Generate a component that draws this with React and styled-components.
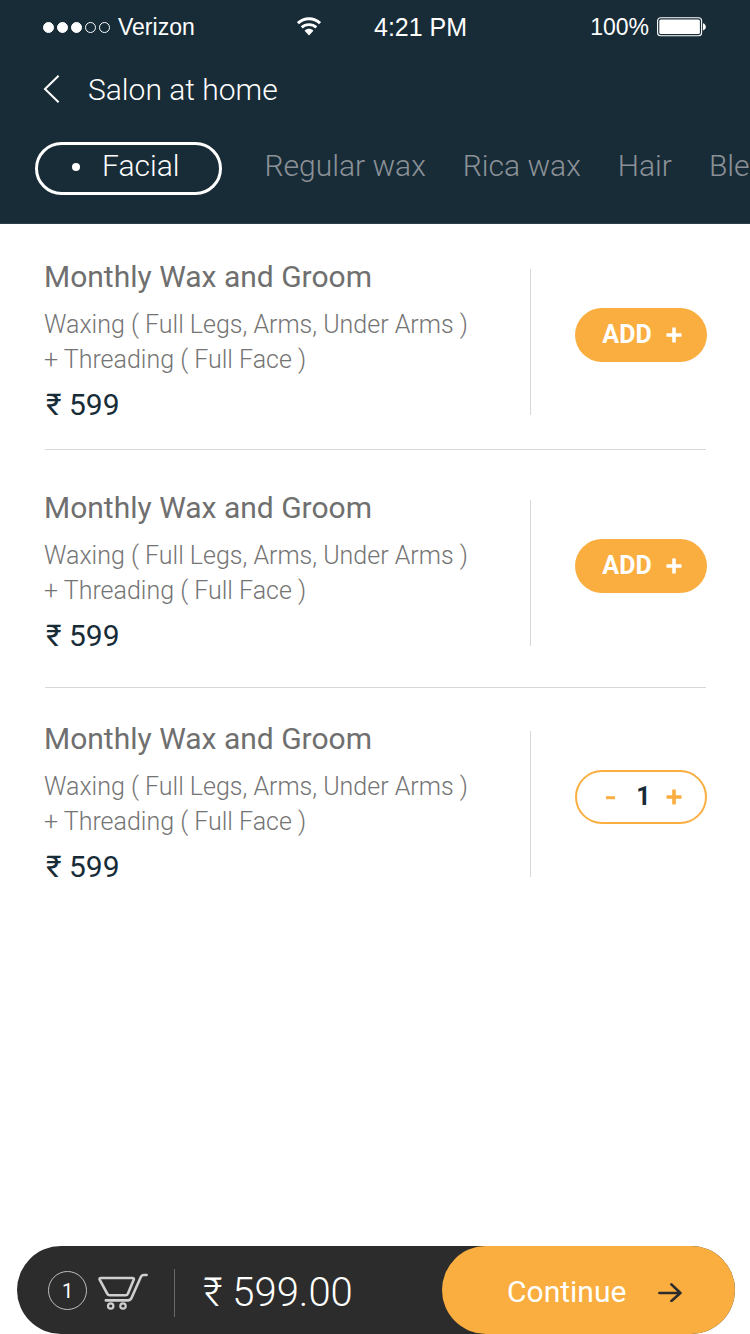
import React from "react";
import styled, { createGlobalStyle } from "styled-components";

const color = {
  navy: "#182c37",
  orange: "#faae40",
  charcoal: "#2c2c2c",
  line: "#d8d8d8",
  title: "#6f6f6f",
  text: "#747474",
  muted: "#8b9197",
};

const GlobalStyle = createGlobalStyle`
  *, *::before, *::after { box-sizing: border-box; }
  body {
    margin: 0;
    background: #fff;
    font-family: Roboto, "Noto Sans", sans-serif;
  }
  button { font-family: inherit; cursor: pointer; }
  svg { display: block; flex: none; }
`;

const Page = styled.div`
  min-height: 100vh;
  display: flex;
  flex-direction: column;
  overflow-x: hidden;
`;

const Header = styled.header`
  background: ${color.navy};
  color: #fff;
  padding-bottom: 28px;
  border-bottom: 1px solid #2c3e48;
`;

const StatusBar = styled.div`
  display: grid;
  grid-template-columns: 254px 77px 1fr auto;
  align-items: center;
  height: 54px;
  padding: 0 44px 0 43px;
  font-family: "Liberation Sans", Arial, sans-serif;
  font-size: 23px;
  line-height: 28px;
`;

const StatusGroup = styled.div`
  display: flex;
  align-items: center;
  gap: 8px;
`;

const Signal = styled.div`
  display: flex;
  gap: 3px;
`;

const SignalDot = styled.span`
  width: 11px;
  height: 11px;
  border: 1px solid #fff;
  border-radius: 50%;
  background: ${(p) => (p.$on ? "#fff" : "transparent")};
`;

const Clock = styled.time`
  font-size: 25px;
`;

const TitleBar = styled.div`
  display: flex;
  align-items: center;
  gap: 27px;
  height: 72px;
  padding: 0 43px;
`;

const BackButton = styled.button`
  display: flex;
  padding: 0 0 2px;
  border: 0;
  background: none;
  color: inherit;
`;

const PageTitle = styled.h1`
  margin: 0;
  font-size: 30px;
  line-height: 36px;
  font-weight: 300;
`;

const Tabs = styled.nav`
  display: flex;
  align-items: center;
  gap: 37px;
  margin-top: 16px;
  padding-left: 35px;
  overflow: hidden;
`;

const Tab = styled.button`
  flex: none;
  padding: 0 0 5px;
  border: 0;
  background: none;
  color: ${color.muted};
  font-size: 30px;
  line-height: 36px;
  font-weight: 300;
`;

const ActiveTab = styled(Tab)`
  display: flex;
  align-items: center;
  gap: 22px;
  height: 53px;
  margin-right: 6px;
  padding: 0 39px 5px 34px;
  border: 3px solid #fff;
  border-radius: 27px;
  color: #fff;
`;

const Bullet = styled.span`
  width: 8px;
  height: 8px;
  margin-top: 2px;
  border-radius: 50%;
  background: currentColor;
`;

const Main = styled.main`
  flex: 1;
  padding: 35px 0;
`;

const Service = styled.article`
  display: flex;
  padding: 0 43px 0 44px;
`;

const Info = styled.div`
  flex: 1;
`;

const Name = styled.h2`
  margin: 0 0 12px;
  color: ${color.title};
  font-size: 30px;
  line-height: 36px;
  font-weight: 400;
`;

const Description = styled.p`
  margin: 0 0 10px;
  color: ${color.text};
  font-size: 25px;
  line-height: 35px;
  font-weight: 300;
`;

const Price = styled.p`
  margin: 0;
  padding-left: 2px;
  color: ${color.navy};
  font-size: 30px;
  line-height: 36px;
`;

const Action = styled.div`
  margin: 10px 0 8px;
  padding: 39px 0 0 44px;
  border-left: 1px solid ${color.line};
`;

const Rule = styled.hr`
  margin: ${(p) => p.$above}px 44px ${(p) => p.$below}px 45px;
  border: 0;
  border-top: 1px solid ${color.line};
`;

const AddButton = styled.button`
  display: flex;
  align-items: center;
  justify-content: center;
  gap: 14px;
  width: 132px;
  height: 54px;
  padding: 0 0 1px 2px;
  border: 0;
  border-radius: 27px;
  background: ${color.orange};
  color: #fff;
  font-size: 25px;
  line-height: 30px;
  font-weight: 700;
`;

const Stepper = styled.div`
  display: flex;
  align-items: center;
  justify-content: space-between;
  width: 132px;
  height: 54px;
  padding: 0 23px 1px 29px;
  border: 2px solid ${color.orange};
  border-radius: 27px;
`;

const StepButton = styled.button`
  display: flex;
  padding: 0;
  border: 0;
  background: none;
  color: ${color.orange};
`;

const Quantity = styled.span`
  padding-left: 6px;
  color: ${color.navy};
  font-size: 25px;
  line-height: 30px;
  font-weight: 700;
`;

const CartBar = styled.footer`
  display: flex;
  align-items: center;
  height: 88px;
  margin: 0 15px 0 17px;
  padding-left: 31px;
  border-radius: 44px;
  background: ${color.charcoal};
  color: #fff;
`;

const CartSummary = styled.div`
  display: flex;
  align-items: flex-start;
  gap: 11px;
  padding-top: 2px;
`;

const Count = styled.span`
  display: flex;
  align-items: center;
  justify-content: center;
  width: 39px;
  height: 39px;
  border: 1px solid #bdbdbd;
  border-radius: 50%;
  font-size: 20px;
`;

const Total = styled.div`
  flex: 1;
  margin: 6px 0 0 26px;
  padding-left: 28px;
  border-left: 1px solid #696969;
  font-size: 40px;
  line-height: 48px;
  font-weight: 300;
  white-space: nowrap;
`;

const ContinueButton = styled.button`
  display: flex;
  align-items: center;
  gap: 32px;
  width: 293px;
  height: 88px;
  padding: 4px 0 0 65px;
  border: 0;
  border-radius: 44px;
  background: ${color.orange};
  color: #fff;
  font-size: 30px;
  line-height: 36px;
`;

const WifiIcon = () => (
  <svg width="24" height="20" viewBox="0 0 24 20" fill="none" stroke="#fff" aria-hidden="true">
    <path d="M1 6.2C7.2 0.2 16.8 0.2 23 6.2" strokeWidth="3" />
    <path d="M4.7 10.4C8.8 6.6 15.2 6.6 19.3 10.4" strokeWidth="2.8" />
    <path d="M7.6 13.8C10.2 11.2 13.8 11.2 16.4 13.8L12 18.4Z" fill="#fff" stroke="none" />
  </svg>
);

const BatteryIcon = () => (
  <svg width="49" height="20" viewBox="0 0 49 20" fill="none" aria-hidden="true">
    <rect x="0.6" y="0.8" width="44" height="18" rx="3" stroke="#fff" strokeWidth="1.1" />
    <rect x="2.3" y="2.5" width="40.6" height="14.6" rx="1.6" fill="#fff" />
    <path d="M46 6.2C49.8 7.3 49.8 12.3 46 13.4Z" fill="#fff" />
  </svg>
);

const BackIcon = () => (
  <svg width="18" height="28" viewBox="0 0 18 28" fill="none" stroke="currentColor" strokeWidth="2" aria-hidden="true">
    <path d="M15.6 0.8L2 14L15.6 27.2" />
  </svg>
);

const PlusIcon = () => (
  <svg width="16" height="16" viewBox="0 0 16 16" fill="none" stroke="currentColor" strokeWidth="3.6" aria-hidden="true">
    <path d="M8 0.5V15.5M0.5 8H15.5" />
  </svg>
);

const MinusIcon = () => (
  <svg width="9" height="16" viewBox="0 0 9 16" fill="none" stroke="currentColor" strokeWidth="3" aria-hidden="true">
    <path d="M0 8.7H9" />
  </svg>
);

const CartIcon = () => (
  <svg width="50" height="40" viewBox="0 0 50 40" fill="none" stroke="#cfcfcf" strokeWidth="2.6" strokeLinecap="round" strokeLinejoin="round" aria-hidden="true">
    <path d="M2.9 7H34.4Q36.4 7 35.7 8.8L30 22.6Q29.3 24.3 27.6 24.3H11.8Q10 24.3 9.2 22.6L1.8 8.8Q1 7 2.9 7Z" />
    <path d="M48.6 4H46Q43.7 4 42.7 6.2L33.6 26.8Q32.5 29.4 30 29.4H7.8" />
    <circle cx="12.7" cy="35" r="2.7" strokeWidth="2.2" />
    <circle cx="25" cy="35" r="2.7" strokeWidth="2.2" />
  </svg>
);

const ArrowIcon = () => (
  <svg width="24" height="20" viewBox="0 0 24 20" fill="none" stroke={color.charcoal} strokeWidth="2.6" strokeLinecap="round" strokeLinejoin="round" aria-hidden="true">
    <path d="M1.4 11H22.4M13.4 2.4L22.4 11L13.4 19" />
  </svg>
);

function ServiceRow({ quantity }) {
  return (
    <Service>
      <Info>
        <Name>Monthly Wax and Groom</Name>
        <Description>
          Waxing ( Full Legs, Arms, Under Arms )
          <br />+ Threading ( Full Face )
        </Description>
        <Price>₹ 599</Price>
      </Info>
      <Action>
        {quantity ? (
          <Stepper>
            <StepButton type="button" aria-label="Remove one">
              <MinusIcon />
            </StepButton>
            <Quantity>{quantity}</Quantity>
            <StepButton type="button" aria-label="Add one">
              <PlusIcon />
            </StepButton>
          </Stepper>
        ) : (
          <AddButton type="button">
            ADD
            <PlusIcon />
          </AddButton>
        )}
      </Action>
    </Service>
  );
}

export default function App() {
  return (
    <>
      <GlobalStyle />
      <Page>
        <Header>
          <StatusBar>
            <StatusGroup>
              <Signal>
                {[true, true, true, false, false].map((on, i) => (
                  <SignalDot key={i} $on={on} />
                ))}
              </Signal>
              Verizon
            </StatusGroup>
            <WifiIcon />
            <Clock>4:21 PM</Clock>
            <StatusGroup>
              100%
              <BatteryIcon />
            </StatusGroup>
          </StatusBar>
          <TitleBar>
            <BackButton type="button" aria-label="Back">
              <BackIcon />
            </BackButton>
            <PageTitle>Salon at home</PageTitle>
          </TitleBar>
          <Tabs>
            <ActiveTab type="button" aria-current="true">
              <Bullet />
              Facial
            </ActiveTab>
            <Tab type="button">Regular wax</Tab>
            <Tab type="button">Rica wax</Tab>
            <Tab type="button">Hair</Tab>
            <Tab type="button">Bleach</Tab>
          </Tabs>
        </Header>
        <Main>
          <ServiceRow />
          <Rule $above={26} $below={40} />
          <ServiceRow />
          <Rule $above={33} $below={33} />
          <ServiceRow quantity={1} />
        </Main>
        <CartBar>
          <CartSummary>
            <Count>1</Count>
            <CartIcon />
          </CartSummary>
          <Total>₹ 599.00</Total>
          <ContinueButton type="button">
            Continue
            <ArrowIcon />
          </ContinueButton>
        </CartBar>
      </Page>
    </>
  );
}
